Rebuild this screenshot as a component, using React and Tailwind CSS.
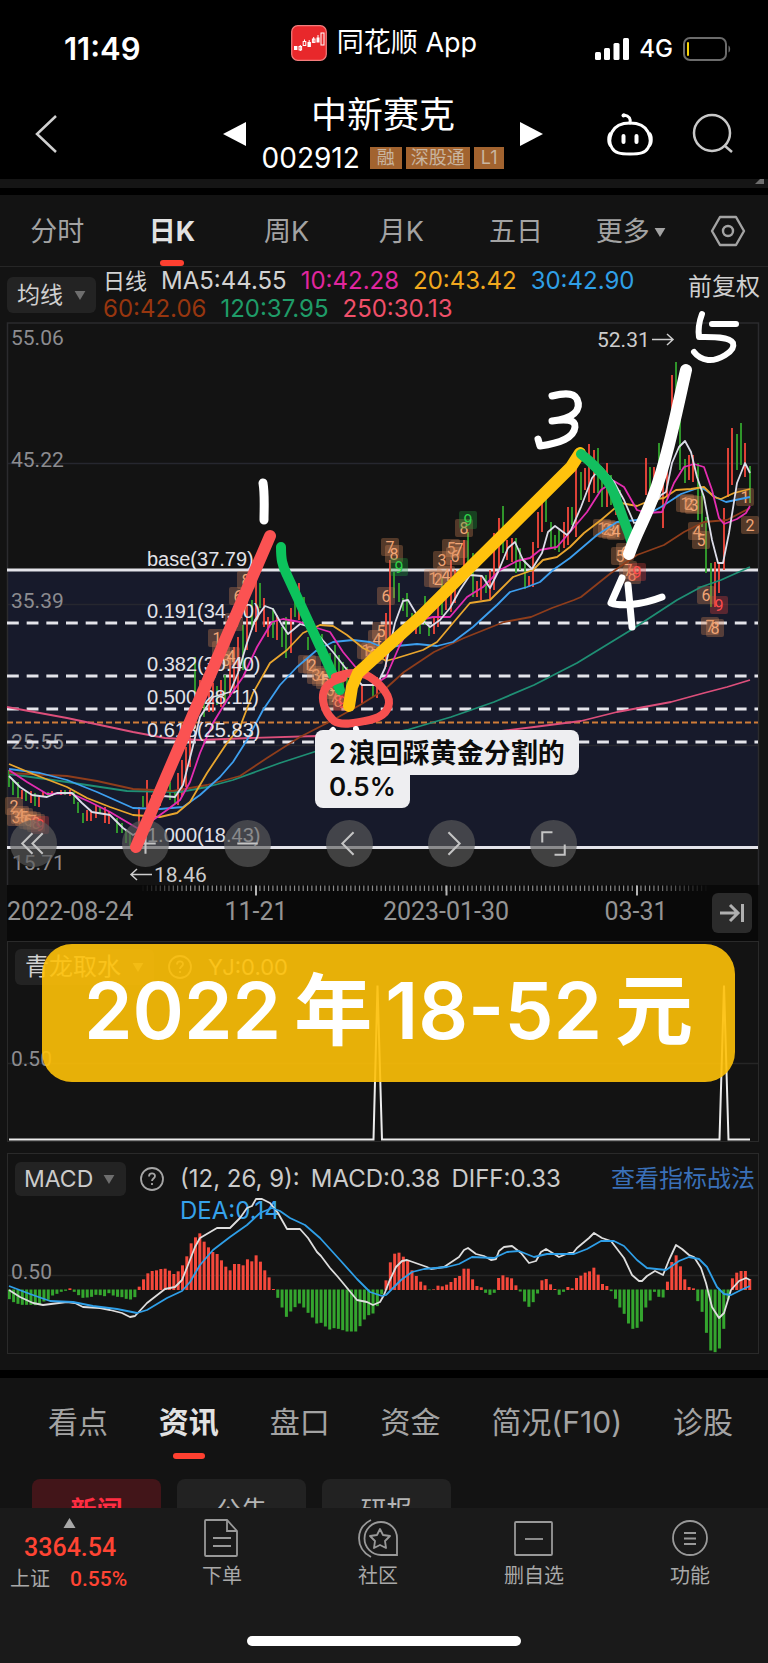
import React, { useState } from "react";

const UP = "#f5483b";
const DOWN = "#34a52e";

const CHART_TABS = ["分时", "日K", "周K", "月K", "五日"];
const NEWS_TABS = ["看点", "资讯", "盘口", "资金", "简况(F10)", "诊股"];

// Moving averages, drawn back to front
const MA_LINES = [
  {
    color: "#dd4f7b",
    points:
      "7,707 67,718 133,732 165,738 200,740 250,738 317,736 384,737 440,736 484,733 534,727 581,721 617,712 671,702 704,693 727,687 750,680",
  },
  {
    color: "#1f8f74",
    points:
      "9,774 67,782 127,791 180,792 207,787 233,780 280,763 320,750 367,738 407,730 451,717 494,702 534,685 577,663 631,630 677,600 701,587 721,580 750,567",
  },
  {
    color: "#8e3d1b",
    points:
      "9,773 67,776 97,781 133,789 173,791 207,785 240,776 267,758 300,737 333,720 360,705 384,690 404,672 434,652 464,638 504,622 531,617 552,608 574,600 581,597 611,573 637,555 664,545 684,532 704,522 727,520 750,508",
  },
  {
    color: "#3d9fef",
    points:
      "9,769 40,773 67,780 97,792 133,808 160,809 183,807 200,795 220,777 233,762 247,740 263,710 280,685 297,667 317,650 333,642 353,640 370,642 384,648 397,646 417,644 437,646 453,642 473,627 497,605 510,592 527,587 540,582 553,570 570,558 597,535 617,522 637,520 661,507 681,494 701,487 717,498 726,502 750,497",
  },
  {
    color: "#e9a62e",
    points:
      "9,764 33,774 67,787 87,798 110,807 133,815 160,817 177,813 190,802 207,773 227,743 240,727 253,693 270,663 287,650 303,633 320,625 333,626 347,635 363,648 377,655 386,661 397,658 423,650 437,642 453,623 470,603 490,600 500,590 513,577 533,570 543,560 557,557 570,547 584,533 601,520 621,503 637,506 651,500 664,498 676,490 691,489 704,487 714,497 721,499 734,493 750,489",
  },
  {
    color: "#e42db1",
    points:
      "9,770 27,782 47,794 70,793 90,802 110,812 137,828 153,820 167,810 180,800 190,782 200,753 213,723 227,700 243,677 257,647 272,622 283,619 300,622 317,628 330,632 343,652 358,670 377,683 386,677 399,647 412,622 433,617 450,617 467,597 483,587 500,570 517,561 530,558 540,550 557,547 570,532 587,512 601,490 614,481 624,487 637,510 647,513 662,512 674,483 684,467 694,464 704,467 712,490 719,518 724,524 737,519 746,513 750,506",
  },
  {
    color: "#dcdce8",
    points:
      "9,776 20,787 32,795 47,797 57,793 72,793 82,803 92,812 110,815 123,828 133,835 142,830 157,803 163,796 175,797 183,785 192,750 200,717 213,697 230,692 238,673 247,643 255,620 265,606 273,609 282,625 288,634 300,624 310,627 320,637 333,652 347,670 362,685 377,685 385,668 395,623 403,601 408,600 417,615 430,627 440,620 450,608 460,590 470,575 482,576 490,588 498,572 508,548 515,542 523,560 532,569 542,553 548,532 555,526 567,535 571,530 581,507 592,478 601,467 614,482 624,500 634,523 644,520 661,495 666,492 672,463 679,447 685,441 691,452 697,477 704,497 712,540 718,563 723,563 729,533 737,483 745,463 750,473",
  },
];

// [x, high, low] of each daily bar
const UP_CANDLES = [
  [22, 790, 799], [31, 791, 803], [39, 797, 807], [43, 792, 797], [52, 791, 796], [61, 790, 795], [70, 790, 796],
  [87, 810, 821], [91, 811, 821], [96, 805, 818], [105, 807, 823], [109, 811, 824], [139, 807, 827], [147, 780, 813],
  [152, 795, 815], [160, 790, 806], [178, 773, 805], [182, 760, 797], [186, 747, 787], [190, 715, 767], [200, 680, 700],
  [209, 687, 712], [213, 683, 712], [221, 680, 707], [230, 657, 697], [234, 647, 693], [238, 637, 690], [247, 590, 650],
  [256, 577, 632], [264, 598, 627], [268, 617, 637], [277, 615, 640], [291, 608, 653], [299, 583, 620], [362, 685, 703],
  [377, 677, 698], [386, 613, 667], [390, 560, 647], [416, 626, 634], [434, 617, 634], [438, 600, 627], [446, 583, 610],
  [451, 560, 612], [455, 570, 603], [464, 540, 577], [477, 581, 597], [481, 575, 600], [490, 570, 599], [494, 533, 590],
  [499, 518, 568], [507, 540, 560], [512, 538, 562], [529, 576, 587], [533, 542, 587], [538, 512, 548], [542, 489, 532],
  [564, 522, 548], [568, 507, 545], [576, 467, 537], [585, 468, 490], [589, 444, 502], [594, 450, 493], [607, 463, 507],
  [616, 490, 515], [646, 458, 495], [654, 467, 490], [663, 480, 528], [667, 460, 497], [672, 375, 420], [689, 455, 480],
  [693, 455, 482], [715, 562, 607], [719, 563, 593], [724, 508, 570], [728, 448, 497], [732, 428, 485], [745, 443, 477],
];

const DOWN_CANDLES = [
  [9, 770, 787], [13, 780, 795], [18, 782, 798], [26, 791, 801], [35, 793, 806], [48, 792, 797], [65, 790, 795],
  [74, 792, 804], [78, 802, 813], [83, 813, 823], [100, 807, 813], [117, 818, 833], [122, 823, 833], [126, 830, 843],
  [130, 833, 846], [143, 796, 807], [170, 782, 800], [175, 790, 803], [195, 657, 703], [204, 690, 717], [217, 686, 705],
  [225, 675, 705], [243, 625, 670], [252, 600, 630], [260, 583, 608], [273, 608, 638], [282, 627, 647], [286, 617, 658],
  [295, 602, 617], [304, 597, 615], [308, 637, 650], [317, 630, 652], [322, 634, 655], [330, 653, 672], [335, 645, 680],
  [339, 655, 683], [343, 662, 690], [347, 667, 690], [373, 682, 697], [394, 572, 598], [399, 583, 602], [403, 598, 611],
  [407, 593, 617], [412, 613, 622], [420, 622, 634], [425, 596, 625], [429, 627, 636], [442, 577, 615], [468, 532, 573],
  [473, 553, 597], [486, 575, 593], [503, 506, 553], [516, 538, 573], [520, 548, 570], [525, 558, 589], [546, 497, 522],
  [551, 522, 547], [555, 535, 550], [559, 530, 552], [572, 507, 525], [581, 472, 500], [598, 448, 493], [602, 480, 507],
  [611, 475, 505], [620, 490, 520], [650, 467, 490], [659, 443, 477], [676, 362, 403], [680, 413, 470], [685, 459, 483],
  [698, 463, 520], [702, 487, 527], [706, 517, 573], [711, 563, 607], [737, 434, 470], [741, 423, 465], [750, 466, 503],
];

// Nine-turn counters: [x, y, digit]
const COUNTERS = [
  [14, 806, 2], [16, 817, 3], [20, 815, 4], [24, 817, 5], [28, 820, 6], [32, 821, 7], [36, 823, 8], [40, 825, 9],
  [217, 638, 1], [221, 650, 2], [226, 660, 3], [231, 656, 4], [234, 622, 5], [238, 596, 6], [246, 580, 8],
  [307, 664, 1], [312, 665, 2], [316, 675, 3], [321, 677, 4], [325, 680, 5], [330, 690, 6], [334, 696, 7], [338, 701, 8],
  [342, 702, 9], [366, 650, 1], [370, 652, 2], [374, 655, 3], [377, 639, 4], [381, 631, 5], [386, 596, 6], [390, 547, 7],
  [394, 554, 8], [399, 567, 9], [433, 578, 1], [438, 579, 2], [442, 560, 3], [446, 575, 4], [451, 548, 5], [455, 556, 6],
  [459, 549, 7], [464, 528, 8], [468, 520, 9], [602, 528, 1], [607, 529, 2], [611, 530, 3], [616, 531, 4], [620, 556, 5],
  [625, 552, 6], [628, 570, 7], [632, 575, 8], [637, 572, 9], [685, 503, 1], [689, 504, 2], [694, 505, 3], [697, 531, 4],
  [701, 540, 5], [706, 595, 6], [719, 605, 9], [710, 626, 7], [715, 628, 8], [745, 497, 1], [750, 525, 2],
];

const FIB_LEVELS = [
  { label: "base(37.79)", y: 566 },
  { label: "0.191(34.10)", y: 618 },
  { label: "0.382(30.40)", y: 671 },
  { label: "0.500(28.11)", y: 704 },
  { label: "0.618(25.83)", y: 737 },
  { label: "1.000(18.43)", y: 842 },
];

// Histogram heights, three units per pixel
const MACD_BARS = [
  -29, -38, -43, -46, -46, -46, -47, -44, -36, -31, -18, -13, -7, -4, 5, -7, -17, -25, -24, -22, -16, -17, -20, -11, -18,
  -22, -23, -28, -30, -23, 10, 32, 50, 57, 59, 63, 64, 58, 48, 56, 74, 101, 140, 158, 170, 145, 128, 114, 108, 89, 70, 59,
  78, 78, 74, 92, 86, 104, 85, 59, 38, 3, -25, -54, -82, -66, -53, -42, -54, -70, -84, -102, -100, -111, -120, -116, -118,
  -122, -126, -126, -126, -110, -90, -77, -72, -50, -15, 29, 83, 109, 112, 100, 87, 59, 42, 25, 14, -2, 2, 13, 11, 16, 24,
  36, 42, 64, 64, 32, 12, 8, -10, -16, -10, 36, 44, 38, 35, 14, -6, -36, -52, -38, -12, 29, 33, 17, 3, -16, -7, 9, 5, 36,
  43, 52, 56, 67, 46, 18, 12, -5, -28, -54, -73, -102, -118, -115, -96, -54, -33, -7, -22, -24, 25, 84, 104, 71, 32, 9, 5,
  -35, -67, -130, -183, -188, -177, -118, -30, 35, 52, 57, 57, 33,
];

const DIFF_POINTS =
  "9,1290 20,1297 33,1303 43,1305 67,1302 75,1303 83,1307 100,1308 110,1310 122,1313 130,1317 135,1316 147,1303 165,1289 175,1287 182,1280 188,1265 195,1247 200,1238 217,1228 230,1228 240,1218 247,1208 252,1206 256,1199 262,1199 270,1203 278,1213 287,1229 300,1229 308,1238 317,1252 321,1256 330,1268 338,1277 357,1300 367,1302 373,1305 380,1302 384,1295 389,1282 396,1267 402,1261 407,1260 427,1267 431,1269 444,1267 459,1257 464,1250 468,1248 476,1254 484,1256 491,1260 496,1259 499,1251 504,1247 512,1246 521,1253 529,1263 536,1261 541,1252 546,1249 559,1257 569,1253 573,1253 577,1248 589,1238 594,1233 602,1238 611,1241 624,1258 632,1275 639,1281 642,1281 647,1276 655,1271 663,1275 669,1260 676,1245 682,1249 689,1255 694,1257 701,1268 706,1283 712,1307 719,1318 724,1313 731,1290 739,1281 746,1278 750,1280";

const DEA_POINTS =
  "9,1286 30,1294 50,1301 73,1302 93,1306 117,1309 137,1313 147,1310 167,1298 182,1291 190,1282 200,1265 213,1250 230,1237 247,1225 260,1213 272,1208 280,1211 290,1218 305,1225 320,1238 340,1260 357,1279 370,1292 382,1296 386,1295 401,1280 412,1272 424,1269 447,1267 459,1264 472,1257 494,1258 507,1252 519,1251 534,1257 547,1254 574,1254 587,1249 601,1241 614,1241 624,1246 637,1260 647,1268 666,1270 679,1261 689,1257 699,1259 707,1267 717,1287 724,1294 731,1295 741,1290 750,1286";

const Caret = ({ className }) => (
  <svg viewBox="0 0 12 10" className={className} aria-hidden="true">
    <path d="M0 0h12L6 10z" fill="currentColor" />
  </svg>
);

const StatusBar = () => (
  <div className="flex h-[84px] items-center justify-between px-9 pt-[2px]">
    <span className="w-[180px] pl-7 pt-3 text-[31px] font-semibold leading-9">11:49</span>
    <div className="flex items-center gap-[10px]">
      <svg viewBox="0 0 36 36" className="size-9" aria-hidden="true">
        <rect x="0.7" y="0.7" width="34.6" height="34.6" rx="6" fill="#e8282b" stroke="#f47c7c" strokeWidth="1.2" />
        <g fill="#fff">
          <rect x="3" y="21" width="3.4" height="4" />
          <rect x="16.5" y="17" width="3.4" height="5" />
          <rect x="25.5" y="12.5" width="3" height="5" />
        </g>
        <g fill="none" stroke="#fff" strokeWidth="1">
          <rect x="8" y="21.5" width="2.6" height="3.4" />
          <rect x="12.2" y="16.5" width="2.6" height="4" />
          <rect x="21.4" y="14" width="2.6" height="3.4" />
          <rect x="30" y="8" width="3" height="12" />
          <path d="M9.3 20v6M13.5 14.5v2M18.2 15v2M22.7 12v6M27 10v3" />
        </g>
      </svg>
      <span className="text-[27px] leading-9">同花顺 App</span>
    </div>
    <div className="flex w-[180px] items-center justify-end gap-[10px] pt-3">
      <svg viewBox="0 0 34 24" className="h-6 w-[34px]" fill="#fff" aria-hidden="true">
        <rect x="0" y="15" width="6" height="8" rx="1.5" />
        <rect x="9" y="11" width="6" height="12" rx="1.5" />
        <rect x="18.5" y="6" width="6" height="17" rx="1.5" />
        <rect x="28" y="1" width="6" height="22" rx="1.5" />
      </svg>
      <span className="text-[24px] font-medium leading-8">4G</span>
      <svg viewBox="0 0 49 24" className="h-6 w-[49px]" aria-hidden="true">
        <rect x="1" y="1" width="42" height="22" rx="6" fill="none" stroke="#6b6b6b" strokeWidth="2" />
        <rect x="4" y="5" width="2" height="14" rx="1" fill="#f7d40a" />
        <path d="M45.5 8.500c2.200 1 2.200 6 0 7z" fill="#6b6b6b" />
      </svg>
    </div>
  </div>
);

const Header = () => (
  <header className="flex h-[95px] items-center pl-8 pr-[34px] pt-1">
    <div className="flex flex-1">
      <button type="button" aria-label="返回">
        <svg viewBox="0 0 28 42" className="h-[42px] w-7" fill="none" stroke="#d0d0d0" strokeWidth="2.5">
          <path d="M24 3 5 21l19 18" />
        </svg>
      </button>
    </div>
    <div className="flex items-center gap-4">
      <button type="button" aria-label="上一只">
        <svg viewBox="0 0 23 24" className="h-6 w-[23px]" fill="#fff">
          <path d="M0 12 23 0v24z" />
        </svg>
      </button>
      <div className="flex flex-col items-center gap-[5px]">
        <h1 className="text-[36px] leading-[44px]">中新赛克</h1>
        <div className="flex items-center gap-[10px]">
          <span className="text-[28px] leading-8">002912</span>
          <span className="flex gap-1 text-[18px] leading-[22px] text-[#c9b5a0]">
            <span className="bg-[#a2632f] px-[7px]">融</span>
            <span className="bg-[#a2632f] px-[5px]">深股通</span>
            <span className="bg-[#a2632f] px-[7px]">L1</span>
          </span>
        </div>
      </div>
      <button type="button" aria-label="下一只">
        <svg viewBox="0 0 23 24" className="h-6 w-[23px]" fill="#fff">
          <path d="M23 12 0 0v24z" />
        </svg>
      </button>
    </div>
    <div className="flex flex-1 justify-end gap-[38px]">
      <button type="button" aria-label="智能助手">
        <svg viewBox="0 0 48 44" className="h-11 w-12" fill="none" stroke="#fff" strokeWidth="3">
          <path d="M24 11c9 0 15 3 18 9 3 7 3 11 0 16-3 5-8 6-18 6s-15-1-18-6c-3-5-3-9 0-16 3-6 9-9 18-9z" />
          <path d="M5 21c-3 2-3 11 0 13M43 21c3 2 3 11 0 13" />
          <path d="M24 11c1-5-1-7-6-8" strokeLinecap="round" />
          <circle cx="17.5" cy="3.5" r="2" fill="#fff" stroke="none" />
          <path d="M17.5 24v6M30.500 24v6" strokeWidth="4" strokeLinecap="round" />
        </svg>
      </button>
      <button type="button" aria-label="搜索">
        <svg viewBox="0 0 42 42" className="size-[42px]" fill="none" stroke="#c8c8c8" strokeWidth="2.5">
          <circle cx="20" cy="20" r="18" />
          <path d="m33 33 7 6" />
        </svg>
      </button>
    </div>
  </header>
);

const PeriodTabs = () => {
  const [active, setActive] = useState("日K");
  return (
    <nav className="flex h-[72px] border-b border-[#262626] text-[27px] text-[#a3a3a3]">
      {CHART_TABS.map((t) => (
        <button
          key={t}
          type="button"
          onClick={() => setActive(t)}
          className={`relative flex-1 pt-1 ${t === active ? "font-bold text-[#e2e2e2]" : ""}`}
        >
          {t}
          {t === active && (
            <span className="absolute bottom-0 left-1/2 h-[6px] w-6 -translate-x-1/2 rounded-sm bg-[#ff4030]" />
          )}
        </button>
      ))}
      <button type="button" className="flex flex-1 items-center justify-center gap-1 pt-1">
        更多
        <Caret className="h-[9px] w-3" />
      </button>
      <button type="button" aria-label="设置" className="flex w-20 items-center justify-center">
        <svg viewBox="0 0 36 32" className="h-8 w-9" fill="none" stroke="#a3a3a3" strokeWidth="2.4">
          <path d="M10 2h16l8 14-8 14H10L2 16z" strokeLinejoin="round" />
          <circle cx="18" cy="16" r="5" />
        </svg>
      </button>
    </nav>
  );
};

const AverageBar = () => (
  <div className="flex h-[55px] items-start pl-[7px] pr-2">
    <button
      type="button"
      className="mt-[10px] flex h-9 w-[89px] items-center justify-center gap-[11px] rounded-md bg-[#232323] text-[23px] text-[#cfcfcf]"
    >
      均线
      <Caret className="h-[9px] w-3 text-[#6e6e6e]" />
    </button>
    <div className="ml-[7px] flex flex-1 flex-wrap gap-x-[14px] text-[24px] leading-7 text-[#d2d2d2]">
      <span className="text-[22px]">日线</span>
      <span>MA5:44.55</span>
      <span className="text-[#e0269f]">10:42.28</span>
      <span className="text-[#f0a81e]">20:43.42</span>
      <span className="text-[#2f9fe6]">30:42.90</span>
      <span className="text-[#97360f]">60:42.06</span>
      <span className="text-[#1f9c68]">120:37.95</span>
      <span className="text-[#f0506a]">250:30.13</span>
    </div>
    <span className="pt-1 text-[24px] leading-8 text-[#cfcfcf]">前复权</span>
  </div>
);

const counterStyle = (n, x) => {
  if (n === 9 && x > 350 && x < 500) return { box: "#1f9a3a", ink: "#2fd04a" };
  if (n === 9) return { box: "#d8403f", ink: "#ff4c4c" };
  return { box: "#d08455", ink: "#f2a676" };
};

const PriceChart = () => {
  const ticks = [];
  for (let i = 0; i < 131; i++) ticks.push(143 + i * 4.33);

  return (
    <svg viewBox="0 322 768 619" className="block h-auto w-full" role="img" aria-label="日K线图">
      <rect x="7.5" y="569" width="751" height="279" fill="#171a2b" />
      <rect x="7" y="885" width="751" height="56" fill="#090909" />
      <g stroke="#2b2b2e" strokeWidth="1.5" fill="none">
        <path d="M7.5 885V323h751v562" />
        <path d="M8 463.5h750M8 604.5h750M8 745.5h750" stroke="#26272f" />
      </g>

      <g fontFamily="Roboto" fontSize="21" fill="#8c8c90">
        <text x="11" y="345">55.06</text>
        <text x="11" y="467">45.22</text>
        <text x="11" y="608">35.39</text>
        <text x="11" y="749">25.55</text>
        <text x="12" y="870">15.71</text>
      </g>

      <g stroke="#e4e4ea" strokeWidth="3">
        <path d="M7 570h751M7 847.5h751" />
        <path d="M7 623h751M7 676h751M7 709h751M7 742h751" strokeDasharray="11.8 7.87" />
      </g>
      <path d="M7 722.5h751" stroke="#cf7c38" strokeWidth="2" strokeDasharray="6 3" />

      <g strokeWidth="1.8">
        {UP_CANDLES.map(([x, a, b]) => (
          <path key={x} d={`M${x} ${a}V${b}`} stroke={UP} />
        ))}
        {DOWN_CANDLES.map(([x, a, b]) => (
          <path key={x} d={`M${x} ${a}V${b}`} stroke={DOWN} />
        ))}
      </g>

      {COUNTERS.map(([x, y, n]) => {
        const s = counterStyle(n, x);
        return (
          <g key={`${x}-${y}`}>
            <rect x={x - 9} y={y - 9} width="18" height="18" rx="2" fill={s.box} opacity="0.34" />
            <text x={x} y={y + 6} textAnchor="middle" fontFamily="Roboto" fontSize="16" fill={s.ink}>
              {n}
            </text>
          </g>
        );
      })}

      {MA_LINES.map((l) => (
        <polyline key={l.color} points={l.points} fill="none" stroke={l.color} strokeWidth="1.8" strokeLinejoin="round" />
      ))}

      <g fontFamily="Liberation Sans" fontSize="20" fill="#e2e2e8">
        {FIB_LEVELS.map((f) => (
          <text key={f.label} x="147" y={f.y}>
            {f.label}
          </text>
        ))}
      </g>

      <g fontFamily="Roboto" fontSize="21" fill="#cdcdcd">
        <text x="597" y="347">52.31</text>
        <text x="154" y="882">18.46</text>
      </g>
      <g fill="none" stroke="#cdcdcd" strokeWidth="1.5">
        <path d="M652 339.500h21M667 334l6 5.500-6 5.500M152 874.500h-21M137 869l-6 5.500 6 5.500" />
      </g>

      <g stroke="#8a8a8a" strokeWidth="1.2">
        {ticks.map((x, i) => (
          <path key={x} d={`M${x} 885.5v5.500`} opacity={Math.min(1, (i + 1) / 12, (131 - i) / 14)} />
        ))}
        <path d="M256 885.5v10M446.500 885.5v10M637 885.500v10" stroke="#b5b5b5" strokeWidth="2" />
      </g>
      <g fontFamily="Roboto" fontSize="25" fill="#949494">
        <text x="7" y="920">2022-08-24</text>
        <text x="256" y="920" textAnchor="middle">11-21</text>
        <text x="446" y="920" textAnchor="middle">2023-01-30</text>
        <text x="636" y="920" textAnchor="middle">03-31</text>
      </g>
    </svg>
  );
};

const TOOLS = [
  { label: "最左", d: "M22 13 12 23l10 10M32 13 22 23l10 10", round: "mr-[10px]" },
  { label: "放大", d: "M23 13v20M13 23h20", round: "" },
  { label: "缩小", d: "M13 23h20", round: "" },
  { label: "左移", d: "M27 12 16 23l11 11", round: "" },
  { label: "右移", d: "M20 12l11 11-11 11", round: "" },
  { label: "全屏", d: "M12 22V12h10M34 24v10H24", round: "" },
];

const ChartTools = () => (
  <>
    <div className="absolute bottom-[74px] left-[10px] flex gap-[55px]">
      {TOOLS.map((t) => (
        <button key={t.label} type="button" aria-label={t.label} className={`size-[47px] rounded-full bg-[#5a5a5a]/65 ${t.round}`}>
          <svg viewBox="0 0 46 46" className="size-full" fill="none" stroke="#c4c4c4" strokeWidth="2">
            <path d={t.d} />
          </svg>
        </button>
      ))}
    </div>
    <button
      type="button"
      aria-label="跳到最新"
      className="absolute bottom-2 right-4 flex size-10 items-center justify-center rounded-md bg-[#2b2b2b]"
    >
      <svg viewBox="0 0 24 22" className="h-[22px] w-6" fill="none" stroke="#b0b0b0" strokeWidth="3">
        <path d="M0 11h17M10 3l8 8-8 8M22.500 2v18" />
      </svg>
    </button>
  </>
);

// Hand-drawn wave count over the price chart
const WaveMarks = () => (
  <svg
    viewBox="0 322 768 619"
    className="pointer-events-none absolute inset-x-0 top-0 h-auto w-full overflow-visible"
    fill="none"
    strokeLinecap="round"
    strokeLinejoin="round"
    aria-hidden="true"
  >
    <path d="M270 536 136 847" stroke="#fb5252" strokeWidth="12" />
    <path d="M281 547c0 12 1 18 6 28l53 115" stroke="#0cc35c" strokeWidth="10" />
    <path d="M335 677c10-4 22-5 31-2 9 4 24 18 23 28-1 11-12 16-24 18-10 2-24 5-31 0-7-6-12-17-11-26 1-8 7-14 20-17" stroke="#f6504f" strokeWidth="8" />
    <path d="M580 453 571 467 420 617 358 673 352 687 349 706" stroke="#ffc20d" strokeWidth="12" />
    <path d="M581 454c8 6 24 21 30 33s9 24 18 47l3 10" stroke="#12bf5f" strokeWidth="10" />
    <g stroke="#fff">
      <path d="M686 370c-9 40-20 94-33 127-7 20-17 36-24 57" strokeWidth="12" />
      <path d="M263 483c2 12 1 26 1 37" strokeWidth="9" />
      <path d="M552 396c8-2 21-5 25 3 5 11-4 20-25 22 12-2 24-2 23 6-1 11-15 16-35 19l-2-7" strokeWidth="7" />
      <path d="M702 314c-3 8-4 16-3 23 9 0 30-1 34 6 3 9-16 18-25 17-7-1-11-4-14-8M712 324h24" strokeWidth="6" />
      <path d="M622 578 611 603c8 3 28 3 51-6M628 585l4 42" strokeWidth="7" />
      <path d="M333 730l-7 7M356 729l2 8" strokeWidth="6" />
    </g>
  </svg>
);

const WaveNote = () => (
  <div className="absolute left-[41%] top-[408px] flex flex-col items-start text-[27px] font-semibold text-[#0c0c0c]">
    <span className="flex gap-[3px] whitespace-nowrap rounded-lg rounded-bl-none bg-[#eeeef1] px-[14px] pb-[2px] pt-[5px] leading-[38px]">
      <span>2</span>
      <span className="text-[27px]">浪回踩黄金分割的</span>
    </span>
    <span className="rounded-b-lg bg-[#eeeef1] px-[14px] pb-[9px] text-[26px] leading-6">0.5%</span>
  </div>
);

const HelpIcon = () => (
  <svg viewBox="0 0 24 24" className="size-6" fill="none" stroke="#a5a5a5" strokeWidth="1.8" aria-hidden="true">
    <circle cx="12" cy="12" r="11" />
    <path d="M9 9.500c0-4 6-4 6-.5 0 2.500-3 2.500-3 5" />
    <path d="M12 16v2" />
  </svg>
);

const SignalPanel = () => (
  <section className="relative ml-[7px] mr-[9px] border border-[#2a2a2a]">
    <div className="absolute left-[7px] top-[7px] flex items-center text-[22px] text-[#d0d0d0]">
      <button type="button" className="flex h-9 items-center gap-[11px] rounded-md bg-[#232323] px-[10px] text-[24px]">
        青龙取水
        <Caret className="h-[9px] w-3 text-[#8a8a8a]" />
      </button>
      <span className="ml-[14px]">
        <HelpIcon />
      </span>
      <span className="ml-4">YJ:0.00</span>
    </div>
    <svg viewBox="8 942 750 199" className="pointer-events-none relative block h-auto w-full" aria-hidden="true">
      <path d="M8 1063.500h750" stroke="#262626" strokeWidth="1.5" />
      <text x="11" y="1066" fontFamily="Roboto" fontSize="21" fill="#8c8c90">0.50</text>
      <path d="M9 1139.500h364.500l4-154 4.500 154h337.500l4.500-154 4.500 154H750" fill="none" stroke="#ececec" strokeWidth="2" />
    </svg>
    <div className="absolute bottom-[59px] left-[34px] right-[23px] top-[2px] flex items-center justify-center rounded-[30px] bg-[#ffc107]/90 pb-1">
      <p className="flex gap-[13px] whitespace-nowrap text-[78px] font-semibold leading-none text-white">
        <span>2022</span>
        <span>年</span>
        <span>18-52</span>
        <span>元</span>
      </p>
    </div>
  </section>
);

const MacdPanel = () => (
  <section className="relative ml-[7px] mr-[9px] mt-[11px] border border-[#2a2a2a] text-[24px] text-[#cbcbcb]">
    <div className="absolute inset-x-[7px] top-2 flex items-start">
      <button
        type="button"
        className="flex h-[34px] w-[111px] shrink-0 items-center gap-[10px] rounded-md bg-[#232323] pl-[9px] text-[23px]"
      >
        MACD
        <Caret className="h-[9px] w-3 text-[#6e6e6e]" />
      </button>
      <span className="ml-[14px] mt-[5px]">
        <HelpIcon />
      </span>
      <div className="ml-4 flex-1 leading-8 pt-px">
        <p className="flex gap-[11px] whitespace-nowrap">
          <span>(12, 26, 9):</span>
          <span>MACD:0.38</span>
          <span>DIFF:0.33</span>
        </p>
        <p className="text-[#36a2ea]">DEA:0.14</p>
      </div>
      <a href="#strategy" className="-mr-1 whitespace-nowrap pt-px leading-8 text-[#3a70b8]">
        查看指标战法
      </a>
    </div>
    <svg viewBox="8 1154 750 199" className="pointer-events-none relative block h-auto w-full" role="img" aria-label="MACD">
      <path d="M8 1275.500h750" stroke="#262626" strokeWidth="1.5" />
      <text x="11" y="1279" fontFamily="Roboto" fontSize="21" fill="#8c8c90">0.50</text>
      {MACD_BARS.map((v, i) => (
        <rect
          key={i}
          x={7.8 + i * 4.33}
          y={v > 0 ? 1290 - v / 3 : 1289.5}
          width="3"
          height={Math.abs(v) / 3}
          fill={v > 0 ? UP : DOWN}
        />
      ))}
      <polyline points={DIFF_POINTS} fill="none" stroke="#dedede" strokeWidth="1.8" strokeLinejoin="round" />
      <polyline points={DEA_POINTS} fill="none" stroke="#2f9fe8" strokeWidth="1.8" strokeLinejoin="round" />
    </svg>
  </section>
);

const NewsSection = () => {
  const [active, setActive] = useState("资讯");
  return (
    <section className="bg-[#131313]">
      <nav className="flex h-[101px] justify-between pl-12 pr-[35px] text-[30px] text-[#a3a3a3]">
        {NEWS_TABS.map((t) => (
          <button
            key={t}
            type="button"
            onClick={() => setActive(t)}
            className={`relative pb-3 ${t === active ? "font-bold text-[#e2e2e2]" : ""}`}
          >
            {t}
            {t === active && (
              <span className="absolute bottom-5 left-1/2 h-[6px] w-8 -translate-x-1/2 rounded-[3px] bg-[#ff4030]" />
            )}
          </button>
        ))}
      </nav>
      <div className="flex h-[29px] items-start gap-4 overflow-hidden pl-8 text-[26px] text-[#b5b5b5]">
        <button type="button" className="h-[62px] w-[129px] shrink-0 rounded-lg bg-[#421519] font-bold text-[#ff2d42]">
          新闻
        </button>
        <button type="button" className="h-[62px] w-[129px] shrink-0 rounded-lg bg-[#222222]">公告</button>
        <button type="button" className="h-[62px] w-[129px] shrink-0 rounded-lg bg-[#222222]">研报</button>
      </div>
    </section>
  );
};

const ACTIONS = [
  {
    label: "下单",
    icon: (
      <>
        <path d="M4 2h21l10 11v24a1 1 0 0 1-1 1H4a1 1 0 0 1-1-1V3a1 1 0 0 1 1-1z" />
        <path d="M25 2v11h10M11 20h18M11 28h18" />
      </>
    ),
  },
  {
    label: "社区",
    icon: (
      <>
        <path d="M23 4a16 16 0 0 1 16 16v17H23a16.500 16.500 0 0 1 0-33z" />
        <path d="M13 2C-3 10-3 30 13 39" />
        <path d="m22 11 3 6 7 1-5 5 1 7-6-3-6 3 1-7-5-5 7-1z" strokeLinejoin="round" />
      </>
    ),
  },
  {
    label: "删自选",
    icon: (
      <>
        <rect x="1" y="4" width="37" height="33" rx="1" />
        <path d="M11 21h18" />
      </>
    ),
  },
  {
    label: "功能",
    icon: (
      <>
        <circle cx="20" cy="20" r="17" />
        <path d="M14 15h12M14 20.500h12M14 26h12" />
      </>
    ),
  },
];

const BottomBar = () => (
  <footer className="bg-[#1a1a1a] pb-[17px]">
    <div className="flex h-32 items-start text-[20px] text-[#a8a8a8]">
      <div className="flex w-36 shrink-0 flex-col pt-[10px] font-['Roboto','Noto_Sans_CJK_SC',sans-serif]">
        <Caret className="ml-[61px] h-[10px] w-[17px] rotate-180 text-[#a8a8a8]" />
        <span className="ml-6 mt-[5px] text-[25px] font-medium leading-[30px] text-[#ff4433]">3364.54</span>
        <span className="ml-[10px] flex items-baseline gap-5 leading-8">
          上证
          <span className="text-[21px] font-medium text-[#ff4433]">0.55%</span>
        </span>
      </div>
      {ACTIONS.map((a) => (
        <button key={a.label} type="button" className="flex flex-1 flex-col items-center gap-[2px] pt-[10px]">
          <svg viewBox="0 0 40 40" className="size-10" fill="none" stroke="#999999" strokeWidth="1.8">
            {a.icon}
          </svg>
          <span className="leading-8">{a.label}</span>
        </button>
      ))}
    </div>
    <div className="mx-auto h-[10px] w-[274px] rounded-full bg-white" />
  </footer>
);

const App = () => (
  <div className="min-h-screen bg-[#131313] font-['Inter','Noto_Sans_CJK_SC',sans-serif] text-white">
    <div className="bg-black">
      <StatusBar />
      <Header />
    </div>
    <div className="flex h-4 justify-end border-b-[7px] border-black bg-[#151515] pr-1">
      <svg viewBox="0 0 9 5" className="h-[5px] w-[9px]" aria-hidden="true">
        <path d="M0 5 5 0h4v5z" fill="#6e6e6e" />
      </svg>
    </div>
    <PeriodTabs />
    <AverageBar />
    <main>
      <section className="relative">
        <PriceChart />
        <ChartTools />
        <WaveMarks />
        <WaveNote />
      </section>
      <SignalPanel />
      <MacdPanel />
    </main>
    <div className="mt-4 h-2 bg-black" />
    <NewsSection />
    <BottomBar />
  </div>
);

export default App;
